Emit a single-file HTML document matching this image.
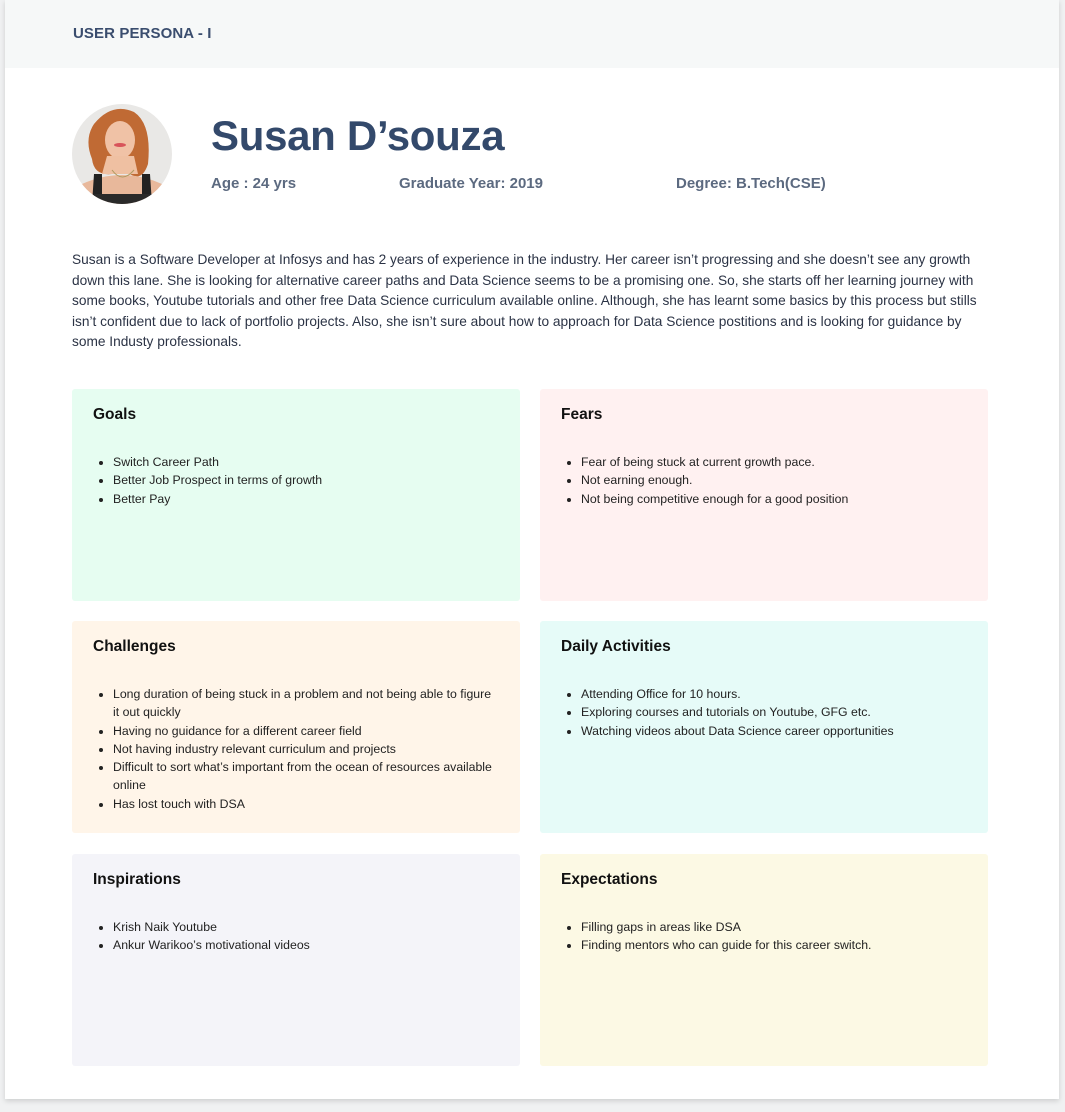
<!DOCTYPE html>
<html><head><meta charset="utf-8"><style>
*{margin:0;padding:0;box-sizing:border-box}
body{width:1065px;height:1112px;background:#f0f1f2;font-family:"Liberation Sans",sans-serif;position:relative;overflow:hidden}
.page{position:absolute;left:5px;top:0;width:1054px;height:1099px;background:#fff;box-shadow:0 2px 5px rgba(0,0,0,.15)}
.hdr{position:absolute;left:0;top:0;width:100%;height:68px;background:#f6f8f8}
.hdr span{position:absolute;left:68px;top:25px;font-size:15px;font-weight:bold;color:#3a4d6e;letter-spacing:.1px}
.name{position:absolute;left:211px;top:112px;font-size:42px;font-weight:bold;color:#33496b;letter-spacing:-.3px}
.meta{position:absolute;top:175px;font-size:15px;font-weight:bold;color:#5c6a80}
.para{position:absolute;left:72px;top:250px;font-size:13.7px;line-height:20.5px;color:#2b3345;white-space:nowrap}
.card{position:absolute;width:448px;height:212px;border-radius:3px;padding:17px 21px}
.card h3{font-size:15.5px;font-weight:bold;color:#111;margin-bottom:29px}
.card ul{padding-left:20px;font-size:12.3px;line-height:18.3px;color:#222;white-space:nowrap}
</style></head><body>
<div class="page">
<div class="hdr"><span>USER PERSONA - I</span></div>
</div>
<svg style="position:absolute;left:72px;top:104px" width="100" height="100" viewBox="0 0 100 100">
<defs><clipPath id="c"><circle cx="50" cy="50" r="50"/></clipPath></defs>
<g clip-path="url(#c)">
<rect width="100" height="100" fill="#e9e8e6"/>
<path d="M22 20 Q40 -2 62 8 Q80 20 76 60 Q70 78 58 70 L40 70 Q22 72 20 55 Q12 35 22 20Z" fill="#c06a34"/>
<ellipse cx="48" cy="36" rx="15" ry="19" fill="#f0c2a6"/>
<path d="M35 52 L62 52 L66 70 L30 70Z" fill="#efc0a2"/>
<path d="M10 80 Q50 62 90 80 L100 100 L0 100Z" fill="#e8b89b"/>
<path d="M22 70 L30 70 L30 100 L20 100Z M70 70 L78 70 L80 100 L70 100Z" fill="#222"/>
<rect x="22" y="90" width="58" height="12" fill="#2a2a2a"/>
<path d="M40 66 Q50 80 62 66" stroke="#b09a60" fill="none"/>
<ellipse cx="48" cy="41" rx="6" ry="2" fill="#d8545a"/>
</g></svg>
<div class="name">Susan D’souza</div>
<div class="meta" style="left:211px">Age : 24 yrs</div>
<div class="meta" style="left:399px">Graduate Year: 2019</div>
<div class="meta" style="left:676px">Degree: B.Tech(CSE)</div>
<div class="para">Susan is a Software Developer at Infosys and has 2 years of experience in the industry. Her career isn’t progressing and she doesn’t see any growth<br>down this lane. She is looking for alternative career paths and Data Science seems to be a promising one. So, she starts off her learning journey with<br>some books, Youtube tutorials and other free Data Science curriculum available online. Although, she has learnt some basics by this process but stills<br>isn’t confident due to lack of portfolio projects. Also, she isn’t sure about how to approach for Data Science postitions and is looking for guidance by<br>some Industy professionals.</div>

<div class="card" style="left:72px;top:389px;background:#e6fdf1"><h3>Goals</h3><ul><li>Switch Career Path</li><li>Better Job Prospect in terms of growth</li><li>Better Pay</li></ul></div>
<div class="card" style="left:540px;top:389px;background:#fff1f1"><h3>Fears</h3><ul><li>Fear of being stuck at current growth pace.</li><li>Not earning enough.</li><li>Not being competitive enough for a good position</li></ul></div>
<div class="card" style="left:72px;top:621px;background:#fff5e9"><h3>Challenges</h3><ul><li>Long duration of being stuck in a problem and not being able to figure<br>it out quickly</li><li>Having no guidance for a different career field</li><li>Not having industry relevant curriculum and projects</li><li>Difficult to sort what’s important from the ocean of resources available<br>online</li><li>Has lost touch with DSA</li></ul></div>
<div class="card" style="left:540px;top:621px;background:#e6fbf8"><h3>Daily Activities</h3><ul><li>Attending Office for 10 hours.</li><li>Exploring courses and tutorials on Youtube, GFG etc.</li><li>Watching videos about Data Science career opportunities</li></ul></div>
<div class="card" style="left:72px;top:854px;background:#f4f4f9"><h3>Inspirations</h3><ul><li>Krish Naik Youtube</li><li>Ankur Warikoo’s motivational videos</li></ul></div>
<div class="card" style="left:540px;top:854px;background:#fcf9e4"><h3>Expectations</h3><ul><li>Filling gaps in areas like DSA</li><li>Finding mentors who can guide for this career switch.</li></ul></div>
</body></html>
